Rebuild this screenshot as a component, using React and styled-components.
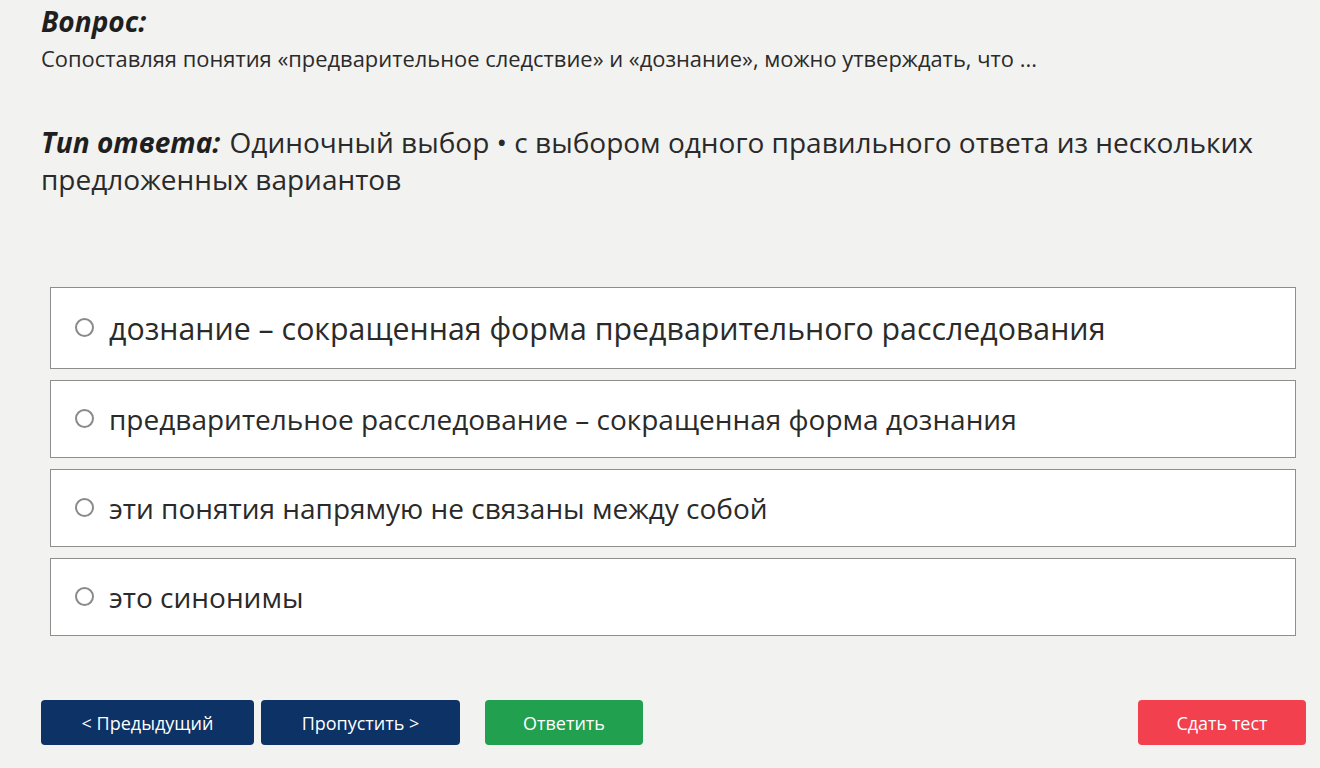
import React from 'react'
import styled, { createGlobalStyle } from 'styled-components'

const GlobalStyle = createGlobalStyle`
  html, body {
    margin: 0;
    padding: 0;
    background: #f2f2f0;
    font-family: "Open Sans", "Noto Sans", sans-serif;
    color: #262626;
  }
`

const options = [
  'дознание – сокращенная форма предварительного расследования',
  'предварительное расследование – сокращенная форма дознания',
  'эти понятия напрямую не связаны между собой',
  'это синонимы',
]

const App = () => {
  const [selected, setSelected] = React.useState(null)
  return (
    <Page>
      <GlobalStyle />
      <Title>Вопрос:</Title>
      <Question>
        Сопоставляя понятия «предварительное следствие» и «дознание», можно утверждать, что ...
      </Question>
      <AnswerType>
        <em>Тип ответа:</em> Одиночный выбор • с выбором одного правильного ответа из нескольких
        предложенных вариантов
      </AnswerType>
      <Options>
        {options.map((text, i) => (
          <Option key={i} $featured={i === 0} onClick={() => setSelected(i)}>
            <Radio $checked={selected === i} />
            <span>{text}</span>
          </Option>
        ))}
      </Options>
      <Footer>
        <Button $color="#0d3266" $width="213px">&lt; Предыдущий</Button>
        <Button $color="#0d3266" $width="199px">Пропустить &gt;</Button>
        <Button $color="#21a04f" $width="158px" $gap="18px">Ответить</Button>
        <Spacer />
        <Button $color="#f2404f" $width="168px">Сдать тест</Button>
      </Footer>
    </Page>
  )
}

export default App

const Page = styled.div`
  width: 1320px;
  height: 768px;
  box-sizing: border-box;
  padding: 4px 14px 0 41px;
  display: flex;
  flex-direction: column;
`

const Title = styled.h1`
  margin: 0;
  font-size: 28px;
  font-weight: 700;
  font-style: italic;
  line-height: 34px;
  color: #1f1f1f;
`

const Question = styled.p`
  margin: 8px 0 0 0;
  font-size: 21.9px;
  line-height: 26px;
  color: #2a2a2a;
  white-space: nowrap;
`

const AnswerType = styled.p`
  margin: 52px 0 0 0;
  font-size: 28px;
  line-height: 37px;
  color: #2a2a2a;
  max-width: 1240px;

  & > em {
    font-weight: 700;
    color: #1f1f1f;
    margin-right: 2px;
  }
`

const Options = styled.div`
  margin: 89px 0 0 9px;
  width: 1246px;
  display: flex;
  flex-direction: column;
  gap: 11px;
`

const Option = styled.label`
  box-sizing: border-box;
  min-height: ${p => (p.$featured ? '82px' : '78px')};
  background: #fff;
  border: 1.5px solid #8e8e8e;
  display: flex;
  align-items: center;
  gap: 15px;
  padding: 0 24px;
  font-size: ${p => (p.$featured ? '30.3px' : '28px')};
  color: #2a2a2a;
  cursor: pointer;
`

const Radio = styled.span`
  width: 19px;
  height: 19px;
  box-sizing: border-box;
  border-radius: 50%;
  border: 2px solid #8a8a8a;
  background: ${p => (p.$checked ? '#0d3266' : '#fff')};
  flex-shrink: 0;
  margin-top: -2px;
`

const Footer = styled.div`
  margin-top: 64px;
  display: flex;
  align-items: center;
  gap: 7px;
`

const Spacer = styled.div`
  flex: 1;
`

const Button = styled.button`
  width: ${p => p.$width};
  height: 45px;
  margin-left: ${p => p.$gap || '0'};
  border: none;
  border-radius: 4px;
  background: ${p => p.$color};
  color: #fff;
  font-family: "Open Sans", "Noto Sans", sans-serif;
  font-size: 18px;
  cursor: pointer;
`
